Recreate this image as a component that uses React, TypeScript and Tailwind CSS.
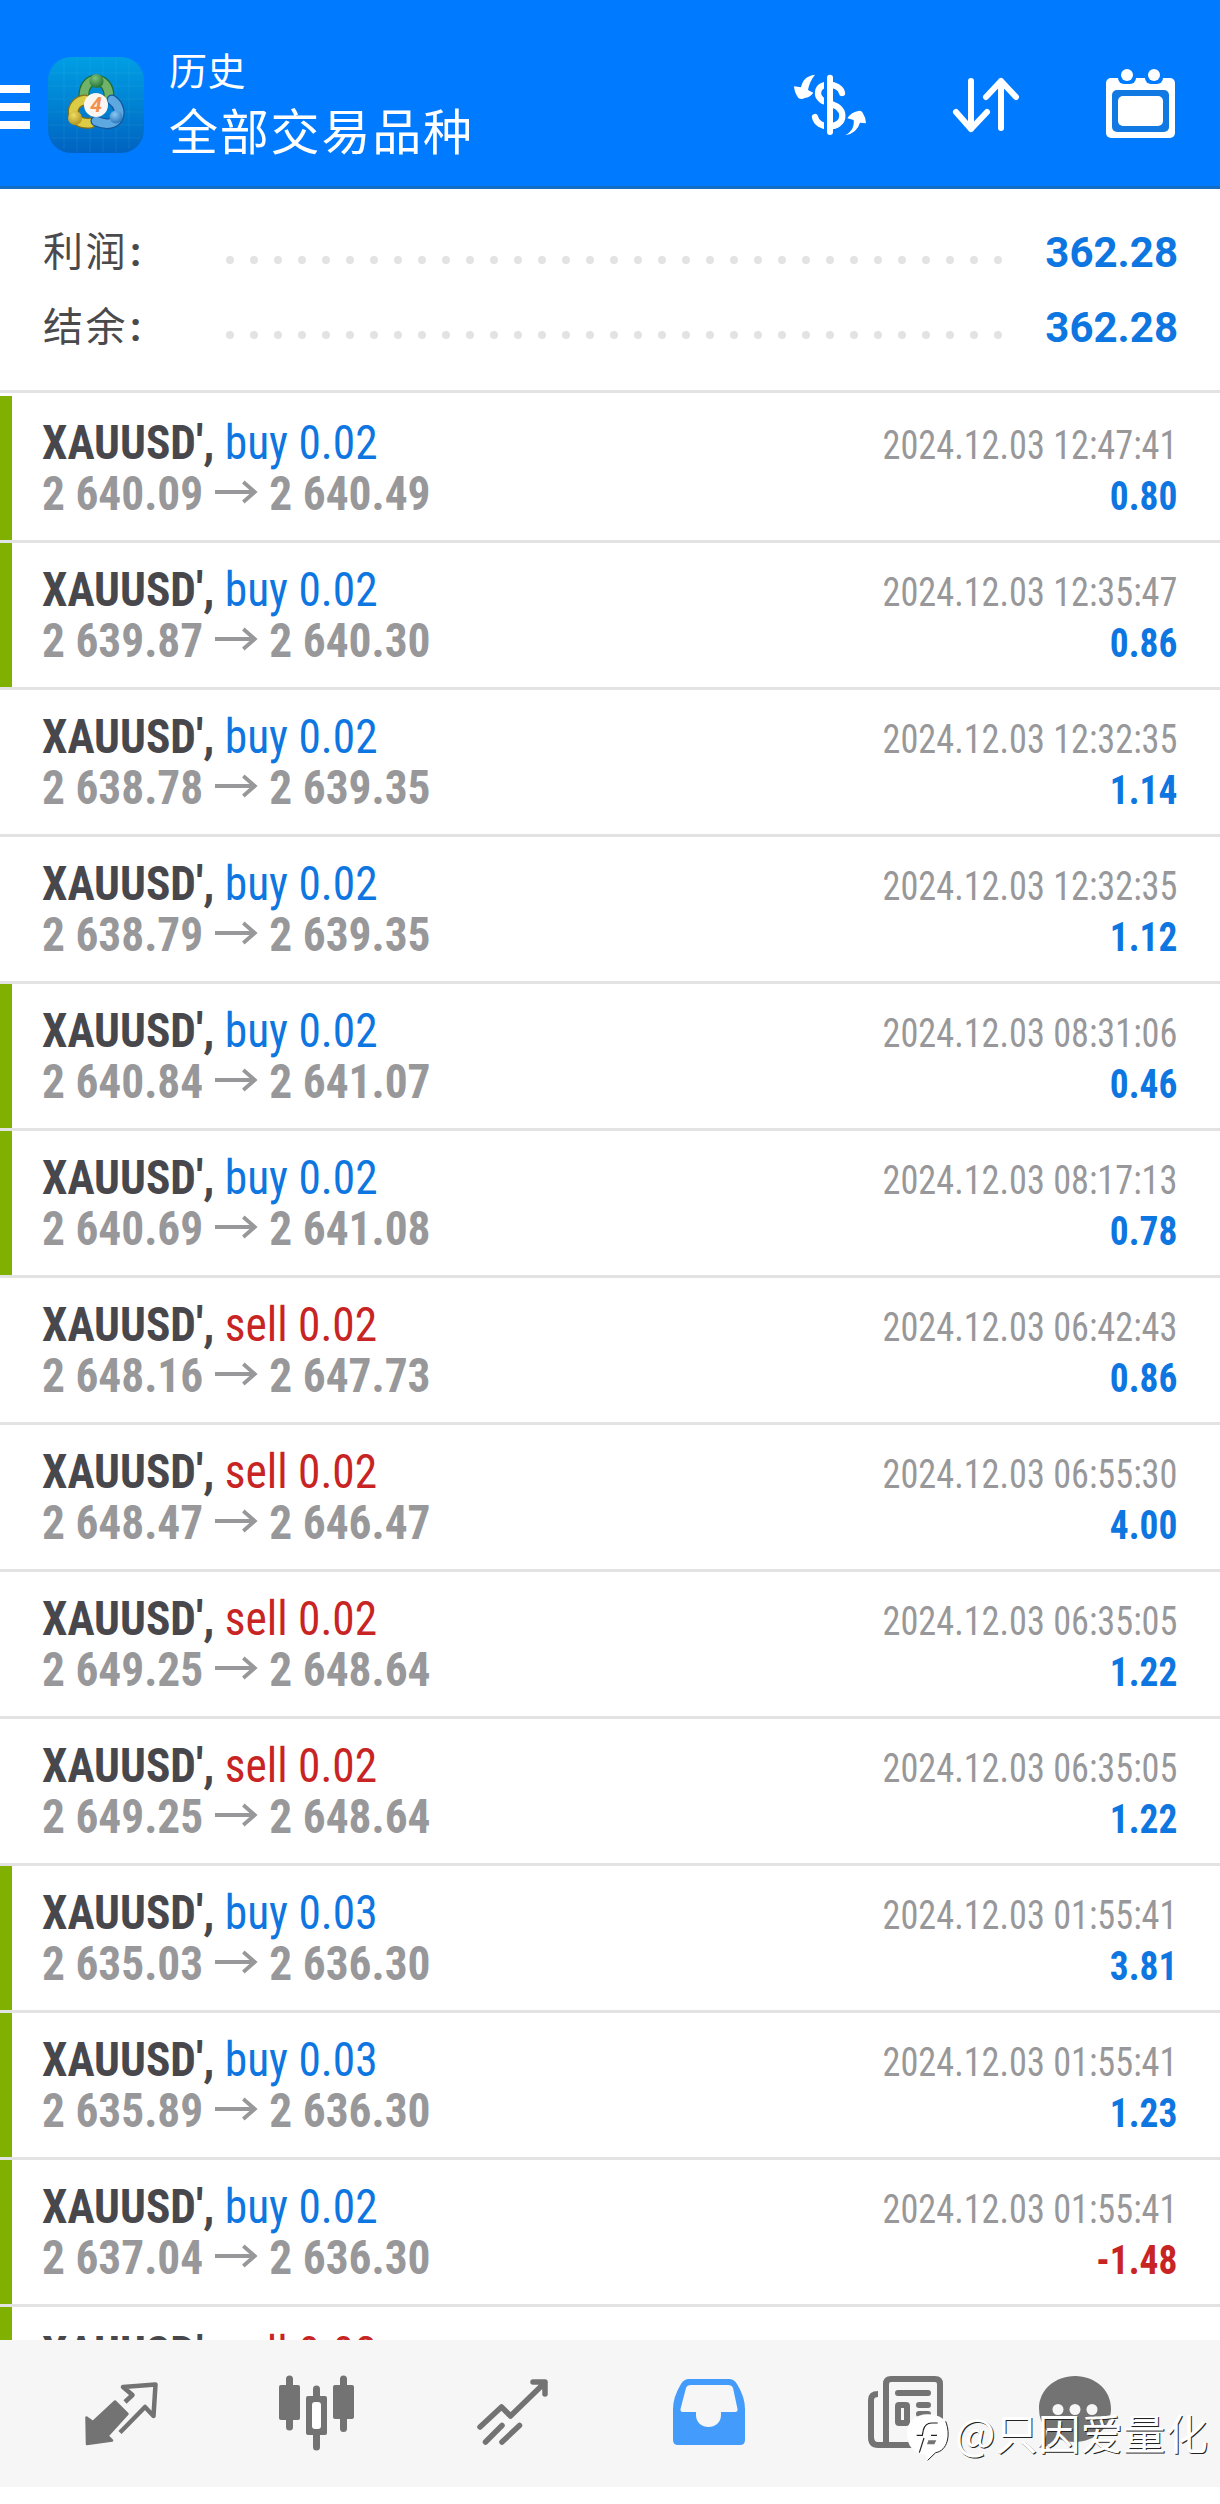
import React from 'react';

type Deal = {
  side: 'buy' | 'sell';
  volume: string;
  open: string;
  close: string;
  time: string;
  profit: string;
  marked?: boolean;
};

const deals: Deal[] = [
  { side: 'buy', volume: '0.02', open: '2 640.09', close: '2 640.49', time: '2024.12.03 12:47:41', profit: '0.80', marked: true },
  { side: 'buy', volume: '0.02', open: '2 639.87', close: '2 640.30', time: '2024.12.03 12:35:47', profit: '0.86', marked: true },
  { side: 'buy', volume: '0.02', open: '2 638.78', close: '2 639.35', time: '2024.12.03 12:32:35', profit: '1.14' },
  { side: 'buy', volume: '0.02', open: '2 638.79', close: '2 639.35', time: '2024.12.03 12:32:35', profit: '1.12' },
  { side: 'buy', volume: '0.02', open: '2 640.84', close: '2 641.07', time: '2024.12.03 08:31:06', profit: '0.46', marked: true },
  { side: 'buy', volume: '0.02', open: '2 640.69', close: '2 641.08', time: '2024.12.03 08:17:13', profit: '0.78', marked: true },
  { side: 'sell', volume: '0.02', open: '2 648.16', close: '2 647.73', time: '2024.12.03 06:42:43', profit: '0.86' },
  { side: 'sell', volume: '0.02', open: '2 648.47', close: '2 646.47', time: '2024.12.03 06:55:30', profit: '4.00' },
  { side: 'sell', volume: '0.02', open: '2 649.25', close: '2 648.64', time: '2024.12.03 06:35:05', profit: '1.22' },
  { side: 'sell', volume: '0.02', open: '2 649.25', close: '2 648.64', time: '2024.12.03 06:35:05', profit: '1.22' },
  { side: 'buy', volume: '0.03', open: '2 635.03', close: '2 636.30', time: '2024.12.03 01:55:41', profit: '3.81', marked: true },
  { side: 'buy', volume: '0.03', open: '2 635.89', close: '2 636.30', time: '2024.12.03 01:55:41', profit: '1.23', marked: true },
  { side: 'buy', volume: '0.02', open: '2 637.04', close: '2 636.30', time: '2024.12.03 01:55:41', profit: '-1.48', marked: true },
];

const AppLogo = () => (
  <svg className="h-24 w-24" viewBox="0 0 96 96">
    <defs>
      <linearGradient id="bg" x1="0" y1="0" x2="0" y2="1">
        <stop offset="0" stopColor="#009fe4" />
        <stop offset="0.5" stopColor="#0082d2" />
        <stop offset="1" stopColor="#0062c0" />
      </linearGradient>
      <radialGradient id="green" cx="0.4" cy="0.3" r="0.8">
        <stop offset="0" stopColor="#7fc27d" />
        <stop offset="1" stopColor="#176b2c" />
      </radialGradient>
      <radialGradient id="yellow" cx="0.4" cy="0.3" r="0.8">
        <stop offset="0" stopColor="#f0dc62" />
        <stop offset="1" stopColor="#a98a18" />
      </radialGradient>
      <radialGradient id="blue" cx="0.4" cy="0.3" r="0.8">
        <stop offset="0" stopColor="#8cc8f3" />
        <stop offset="1" stopColor="#1c6cb5" />
      </radialGradient>
    </defs>
    <rect width="96" height="96" rx="23" fill="url(#bg)" />
    <path
      d="M16 4V92M29 1V95M42 1V95M55 1V95M68 1V95M81 4V92M2 16H94M1 29H95M1 42H95M1 55H95M1 68H95M4 81H92"
      stroke="#6cc8f0"
      strokeOpacity="0.12"
    />
    <g strokeLinecap="round" fill="none">
      <path d="M36 41C34 17 62 17 61 41" stroke="#1f6b2e" strokeWidth="11" />
      <path d="M36 41C34 17 62 17 61 41" stroke="#6fb268" strokeWidth="8.5" />
      <path d="M37 43C20 45 21 69 43 66" stroke="#80701a" strokeWidth="11" />
      <path d="M37 43C20 45 21 69 43 66" stroke="#dccb45" strokeWidth="8.5" />
      <path d="M64 43C78 53 71 74 48 64" stroke="#14569c" strokeWidth="11" />
      <path d="M64 43C78 53 71 74 48 64" stroke="#5ea8e2" strokeWidth="8.5" />
    </g>
    <circle cx="48.5" cy="24" r="7" fill="url(#green)" />
    <circle cx="27" cy="61" r="7" fill="url(#yellow)" />
    <circle cx="68" cy="60" r="6.5" fill="url(#blue)" />
    <circle cx="48" cy="48" r="12" fill="#fbf6f1" />
    <text x="48" y="55" textAnchor="middle" fontSize="21" fontWeight="700" fontStyle="italic" fill="#f2904e" fontFamily="Roboto, sans-serif">
      4
    </text>
  </svg>
);

const CurrencyIcon = () => (
  <svg className="h-20 w-20" viewBox="90 81 240 240">
    <path
      d="M246 159C240 128 174 122 174 160C174 198 247 182 247 228C247 268 172 270 165 231"
      fill="none"
      stroke="#fff"
      strokeWidth="19"
      strokeLinecap="round"
    />
    <path d="M192 100H209V290H192Z" fill="#007aff" />
    <path d="M210 113V276" stroke="#fff" strokeWidth="18" strokeLinecap="round" />
    <g fill="#fff">
      <path d="M165 104C140 107 127 121 123 142L102 139Q103 158 115 174Q125 180 134 174Q150 172 160 158L144 150Q148 125 165 104Z" />
      <path d="M256 286C277 274 283 258 281 240L262 235Q273 216 298 212Q305 212 308 218Q317 231 318 250L300 248Q291 279 256 286Z" />
    </g>
  </svg>
);

const SortIcon = () => (
  <svg className="h-20 w-20" viewBox="0 0 80 80" fill="none" stroke="#fff" strokeWidth="6" strokeLinecap="round" strokeLinejoin="round">
    <path d="M25 14V62M10 45L25 62L41 45M55 61V14M40 30L55 14L70 30" />
  </svg>
);

const CalendarIcon = () => (
  <svg className="h-20 w-20" viewBox="0 0 80 80">
    <rect x="6" y="11" width="69" height="60" rx="5" fill="#fff" />
    <rect x="18" y="2" width="18" height="15" rx="6" fill="#007aff" />
    <rect x="45" y="2" width="18" height="15" rx="6" fill="#007aff" />
    <circle cx="27" cy="8" r="6" fill="#fff" />
    <circle cx="54" cy="8" r="6" fill="#fff" />
    <rect x="12" y="23" width="57" height="42" rx="5" fill="#1278e2" />
    <rect x="18" y="29" width="45" height="30" rx="5" fill="#fff" />
  </svg>
);

const QuotesIcon = () => (
  <svg className="h-[84px] w-20" viewBox="0 0 80 84" strokeLinejoin="round">
    <path d="M4.500 47.500L11 52L33 31.500L45.500 44L25.500 66L30 70.500L5 74Z" fill="#737373" stroke="#737373" strokeWidth="2.500" />
    <path d="M43 32L50.500 25L41 17L73.500 14.500L71.500 46L63 37L38 62.500" fill="none" stroke="#737373" strokeWidth="4.500" />
  </svg>
);

const CandlesIcon = () => (
  <svg className="h-[84px] w-20" viewBox="0 0 80 84">
    <path d="M11.500 9V57M38.500 19V77M65.500 9V58.500" stroke="#737373" strokeWidth="7" strokeLinecap="round" />
    <rect x="1" y="15" width="21" height="35" rx="2" fill="#737373" />
    <rect x="28" y="26" width="21" height="39" rx="2" fill="#737373" />
    <rect x="55" y="15" width="21" height="34" rx="2" fill="#737373" />
    <rect x="34" y="32" width="9" height="27" rx="3" fill="#fff" />
  </svg>
);

const TrendIcon = () => (
  <svg className="h-[84px] w-20" viewBox="0 0 80 84" fill="none" stroke="#737373" strokeWidth="5.500" strokeLinecap="round" strokeLinejoin="round">
    <path d="M6 57L27.500 37L36.500 46L71 12.500M59 12H71V24M11.500 72L28 55.500M28 72L45.500 55.500" />
  </svg>
);

const TrayIcon = () => (
  <svg className="h-[84px] w-20" viewBox="0 0 80 84">
    <path d="M19 9H59Q64 9 67 14Q75 27 75 39V70Q75 75 70 75H8Q3 75 3 70V39Q3 27 11 14Q14 9 19 9Z" fill="#439cfc" />
    <path d="M21 15H58Q62 15 63 18L67.500 39Q68 42 65 42H51V45C51 61 26 61 26 45V42H13Q10 42 10.500 39L16 18Q17 15 21 15Z" fill="#f6f6f6" />
  </svg>
);

const NewsIcon = () => (
  <svg className="h-[84px] w-20" viewBox="0 0 80 84">
    <path d="M12 24Q5 24 5 30V67Q5 75 12 75H68Q74 75 74 69V14Q74 9 69 9H25Q20 9 20 14V75" fill="none" stroke="#737373" strokeWidth="6" />
    <path d="M32 23H62M53 35H62M53 44H62" stroke="#737373" strokeWidth="6" strokeLinecap="round" />
    <rect x="32" y="35" width="9" height="18" rx="1" fill="none" stroke="#737373" strokeWidth="6" />
  </svg>
);

const ChatIcon = () => (
  <svg className="h-[84px] w-20" viewBox="0 0 80 84">
    <path d="M39 6C59 6 75 20 75 38.500C75 57 59 72 39 72Q30 72 23 69Q14 77 3 78Q10 70 11 61Q3 51 3 38.500C3 20 19 6 39 6Z" fill="#737373" />
    <circle cx="22" cy="39.500" r="5.500" fill="#f6f6f6" />
    <circle cx="39" cy="39.500" r="5.500" fill="#f6f6f6" />
    <circle cx="56" cy="39.500" r="5.500" fill="#f6f6f6" />
  </svg>
);

const SummaryRow: React.FC<{ label: string; value: string }> = ({ label, value }) => (
  <div className="flex h-[75px] items-center justify-between pl-[43px] pr-[42px]">
    <span className="mt-[3px] w-[183px] text-[40px] tracking-[2.5px] text-[#4a4a4d]">
      {label}
      <span className="ml-0.5 font-bold">:</span>
    </span>
    <div className="mt-[17px] flex gap-4">
      {Array.from({ length: 33 }, (_, i) => (
        <i key={i} className="h-2 w-2 rounded-full bg-[#e3e3e3]" />
      ))}
    </div>
    <span className="ml-auto mt-[2px] font-['Roboto'] text-[42px] font-bold text-[#0d76e0]">{value}</span>
  </div>
);

const DealRow: React.FC<{ deal: Deal }> = ({ deal }) => (
  <li className="flex h-[147px] border-b-[3px] border-[#e3e3e3] font-['Roboto_Condensed','Roboto',sans-serif] [font-stretch:75%]">
    <div className={deal.marked ? 'w-3 bg-[#80b000]' : 'w-3'} />
    <div className="flex flex-1 justify-between whitespace-nowrap pl-[30px] pr-[43px] pt-[21px] leading-[51px]">
      <div className="origin-left scale-x-[0.945] text-[48px]">
        <div>
          <span className="font-bold text-[#48484c]">XAUUSD',</span>{' '}
          <span className={deal.side === 'buy' ? 'text-[#0d76e0]' : 'text-[#c82424]'}>
            {deal.side} {deal.volume}
          </span>
        </div>
        <div className="flex items-center font-bold text-[#98989a]">
          {deal.open}
          <svg className="mx-3 h-6 w-[46px] -translate-y-0.5" viewBox="0 0 46 24" fill="none" stroke="#98989a" strokeWidth="4">
            <path d="M0 12H43M30 2L42 12L30 22" />
          </svg>
          {deal.close}
        </div>
      </div>
      <div className="pt-[3px] text-right text-[40px]">
        <div className="origin-right scale-x-[0.906] text-[#98989a]">{deal.time}</div>
        <div
          className={
            deal.profit.startsWith('-')
              ? 'origin-right scale-x-[0.935] font-bold text-[#c82424]'
              : 'origin-right scale-x-[0.935] font-bold text-[#0d76e0]'
          }
        >
          {deal.profit}
        </div>
      </div>
    </div>
  </li>
);

const Watermark = () => (
  <div className="absolute right-[12px] top-[64px] flex items-center font-['Noto_Sans_CJK_SC',sans-serif] text-[42.5px] leading-[56px] text-white [text-shadow:1px_1px_0_#222]">
    <svg className="h-[50px] w-[50px] translate-y-[5px]" viewBox="72 162 150 150">
      <path d="M140 169C178 169 202 188 202 222C202 258 190 276 162 286L138 308L134 290C98 286 78 264 78 228C78 192 102 169 140 169Z" fill="#fff" />
      <path d="M194 190C210 230 200 278 164 284L140 307" fill="none" stroke="#222" strokeWidth="3" />
      <path d="M170 195H152Q132 196 127 216L124 232H107M129 240L115 284M150 232H168" fill="none" stroke="#222" strokeWidth="3.500" />
      <path d="M142 247H166L160 259H138Z" fill="#737373" />
    </svg>
    @只因爱量化
  </div>
);

export default function App() {
  return (
    <div className="flex h-[2504px] w-[1220px] flex-col overflow-hidden bg-white font-['Roboto','Noto_Sans_CJK_SC',sans-serif]">
      <header className="flex h-[189px] shrink-0 border-b-[3px] border-[#146fc4] bg-[#007aff] text-white">
        <div className="mt-[85px] flex w-[30px] flex-col gap-2.5">
          <i className="h-2 bg-white" />
          <i className="h-2 bg-white" />
          <i className="h-2 bg-white" />
        </div>
        <div className="ml-[18px] mt-[57px]">
          <AppLogo />
        </div>
        <div className="ml-[25px] mt-[44px]">
          <div className="text-[38px] leading-[56px] tracking-[0.5px]">历史</div>
          <div className="mt-[2px] text-[49px] leading-[64px] tracking-[1.8px]">全部交易品种</div>
        </div>
        <div className="ml-auto mr-[40px] mt-[67px] flex">
          <CurrencyIcon />
          <div className="ml-[76px] mr-[74px]">
            <SortIcon />
          </div>
          <CalendarIcon />
        </div>
      </header>

      <section className="mb-[3px] h-[204px] shrink-0 border-b-[3px] border-[#e3e3e3] pt-[25px]">
        <SummaryRow label="利润" value="362.28" />
        <SummaryRow label="结余" value="362.28" />
      </section>

      <ul className="h-[1944px] shrink-0 overflow-hidden">
        {deals.map((deal, i) => (
          <DealRow key={i} deal={deal} />
        ))}
        <DealRow deal={{ side: 'sell', volume: '0.02', open: '2 636.30', close: '2 635.10', time: '', profit: '', marked: true }} />
      </ul>

      <nav className="relative flex h-[147px] shrink-0 bg-[#f6f6f6] pl-6 pt-[30px]">
        <div className="flex w-[196px] justify-center"><QuotesIcon /></div>
        <div className="flex w-[196px] justify-center"><CandlesIcon /></div>
        <div className="flex w-[196px] justify-center"><TrendIcon /></div>
        <div className="flex w-[196px] justify-center"><TrayIcon /></div>
        <div className="flex w-[196px] justify-center"><NewsIcon /></div>
        <div className="flex w-[144px] justify-center"><ChatIcon /></div>
        <Watermark />
      </nav>
    </div>
  );
}
